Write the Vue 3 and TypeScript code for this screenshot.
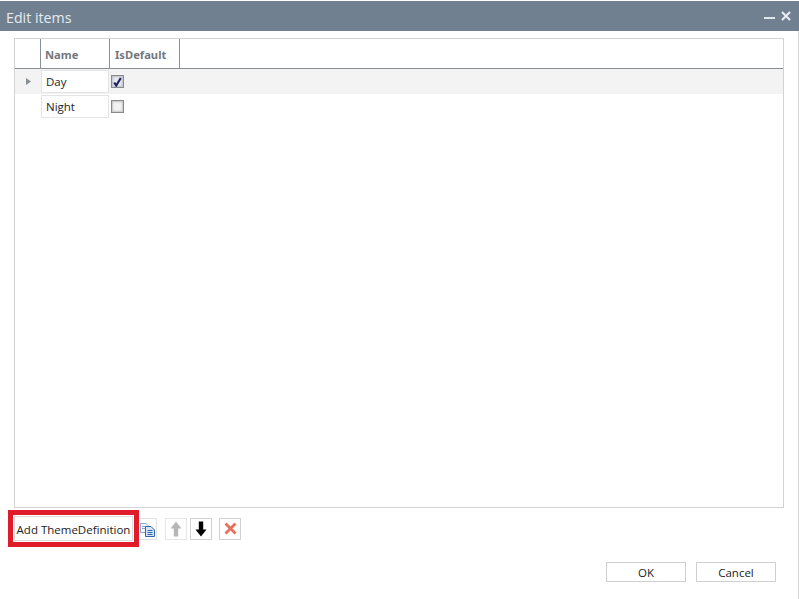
<script setup lang="ts">
interface Item { name: string; isDefault: boolean }
const items: Item[] = [
  { name: 'Day', isDefault: true },
  { name: 'Night', isDefault: false },
]
</script>

<template>
  <div class="dialog">
    <header class="titlebar">
      <span class="title">Edit items</span>
      <span class="winbtns">
        <svg width="14" height="14" viewBox="0 0 14 14"><rect x="1" y="8" width="11" height="2" fill="#dfe6ec" /></svg>
        <svg width="12" height="12" viewBox="0 0 12 12"><path d="M2 2 L10 10 M10 2 L2 10" stroke="#e6ebf0" stroke-width="2.2" fill="none" /></svg>
      </span>
    </header>

    <main class="content">
      <section class="grid">
        <div class="grid-head">
          <div class="h-gutter"></div>
          <div class="h-name">Name</div>
          <div class="h-def">IsDefault</div>
        </div>
        <div v-for="(it, i) in items" :key="it.name" class="row" :class="{ selected: i === 0 }">
          <div class="gutter">
            <svg v-if="i === 0" width="5" height="7" viewBox="0 0 5 7"><path d="M0 0 L5 3.5 L0 7 Z" fill="#8a8f94" /></svg>
          </div>
          <div class="name-cell">{{ it.name }}</div>
          <div class="check" :class="{ on: it.isDefault }">
            <svg v-if="it.isDefault" width="9" height="10" viewBox="0 0 9 10"><path d="M1.2 5.5 L3.2 8.5 L7.8 1" stroke="#23235f" stroke-width="2.2" fill="none" /></svg>
          </div>
        </div>
      </section>

      <div class="toolbar">
        <div class="highlight"><button class="add">Add ThemeDefinition</button></div>
        <div class="ico copy">
          <svg width="15" height="14" viewBox="0 0 15 14">
            <path d="M0.5 0.5 H6 L8 2.5 V9.5 H0.5 Z" fill="#f4f8fd" stroke="#86a5cf" />
            <path d="M2 3.5 H6 M2 5.5 H5" stroke="#86a5cf" />
            <path d="M5.5 3.5 H11 L14.5 7 V13.5 H5.5 Z" fill="#d5e5f7" stroke="#2f66ad" />
            <path d="M7.5 7.5 H12.5 M7.5 9.5 H12.5 M7.5 11.5 H12.5" stroke="#2f66ad" />
          </svg>
        </div>
        <div class="ico up">
          <svg width="12" height="16" viewBox="0 0 12 16"><path d="M6 0.5 L11.5 7.5 H8.2 V15.5 H3.8 V7.5 H0.5 Z" fill="#b4b7b4" /></svg>
        </div>
        <div class="ico down">
          <svg width="12" height="16" viewBox="0 0 12 16"><path d="M3.8 0.5 H8.2 V8.5 H11.5 L6 15.5 L0.5 8.5 H3.8 Z" fill="#000" /></svg>
        </div>
        <div class="ico del">
          <svg width="13" height="13" viewBox="0 0 13 13"><path d="M1.5 1.5 L11.5 11.5 M11.5 1.5 L1.5 11.5" stroke="#ea6d57" stroke-width="2.8" fill="none" /></svg>
        </div>
      </div>

      <footer class="actions">
        <button class="act">OK</button>
        <button class="act">Cancel</button>
      </footer>
    </main>
  </div>
</template>

<style>
html, body { margin: 0; background: #fff; }
</style>

<style scoped>
.dialog {
  width: 799px;
  height: 599px;
  box-sizing: border-box;
  padding-top: 1px;
  display: flex;
  flex-direction: column;
  background: #fff;
  font-family: "Open Sans", "Noto Sans", sans-serif;
  color: #1c1c1c;
  overflow: hidden;
}
.titlebar {
  height: 30px;
  flex: none;
  background: #708090;
  display: flex;
  align-items: center;
  justify-content: space-between;
  padding: 0 7px 0 6px;
}
.title { color: #e6ebef; font-size: 14.2px; padding-top: 2px; }
.winbtns { display: flex; align-items: center; gap: 3px; }
.content {
  flex: 1;
  display: flex;
  flex-direction: column;
  border-right: 1px solid #d6d6d6;
}
.grid {
  flex: none;
  height: 470px;
  box-sizing: border-box;
  margin: 7px 14px 0 14px;
  border: 1px solid #d3d3d3;
}
.grid-head {
  display: flex;
  height: 30px;
  box-sizing: border-box;
  border-bottom: 1px solid #8a8f94;
  font-family: "Noto Sans", "DejaVu Sans", sans-serif;
  font-weight: 700;
  font-size: 11.2px;
  color: #74787c;
}
.grid-head > div {
  display: flex;
  align-items: center;
  box-sizing: border-box;
  border-right: 1px solid #8a8f94;
  padding: 1px 0 0 4px;
}
.h-gutter { width: 26px; }
.h-name { width: 69px; }
.h-def { width: 70px; padding-left: 5px !important; }
.row { height: 25px; display: flex; align-items: center; }
.row.selected { background: #f3f3f3; }
.gutter { width: 26px; display: flex; justify-content: center; }
.name-cell {
  width: 68px;
  height: 23px;
  box-sizing: border-box;
  border: 1px solid #e4e4e4;
  background: #fff;
  font-size: 11.5px;
  line-height: 21px;
  padding-left: 4px;
}
.check {
  width: 13px;
  height: 13px;
  margin-left: 2px;
  box-sizing: border-box;
  border: 1px solid #8a8a8a;
  background: #f4f4f4;
  box-shadow: inset 0 0 2px 1px #c4c4c4;
  display: flex;
  align-items: center;
  justify-content: center;
}
.check.on { background: #e6e8f0; box-shadow: inset 0 0 2px 1px #bcc0cc; }
.toolbar {
  flex: none;
  margin: 2px 0 0 8px;
  height: 37px;
  display: flex;
  align-items: center;
}
.highlight {
  flex: none;
  border: 5px solid #e01b2a;
  padding: 1px;
  width: 131px;
  height: 37px;
  box-sizing: border-box;
}
.add {
  display: block;
  width: 119px;
  height: 25px;
  padding: 1px 0 0;
  border: 1px solid #dcdcdc;
  background: #fff;
  font: 11.5px "Open Sans", "Noto Sans", sans-serif;
  color: #1c1c1c;
  white-space: nowrap;
}
.ico {
  flex: none;
  width: 22px;
  height: 22px;
  box-sizing: border-box;
  border: 1px solid #d2d2d2;
  display: flex;
  align-items: center;
  justify-content: center;
}
.copy {
  width: 18px;
  border-left: 0;
  border-color: #e2e2e2;
  justify-content: flex-start;
  padding: 3px 0 0 1px;
}
.up { margin-left: 8px; border-color: #e6e6e6; }
.down { margin-left: 3px; }
.del { margin-left: 7px; }
.actions {
  flex: none;
  margin: 15px 22px 0 0;
  display: flex;
  justify-content: flex-end;
  gap: 10px;
}
.act {
  width: 80px;
  height: 20px;
  padding: 0;
  border: 1px solid #cfcfcf;
  background: #fff;
  font: 11.5px "Open Sans", "Noto Sans", sans-serif;
  color: #1c1c1c;
}
</style>
